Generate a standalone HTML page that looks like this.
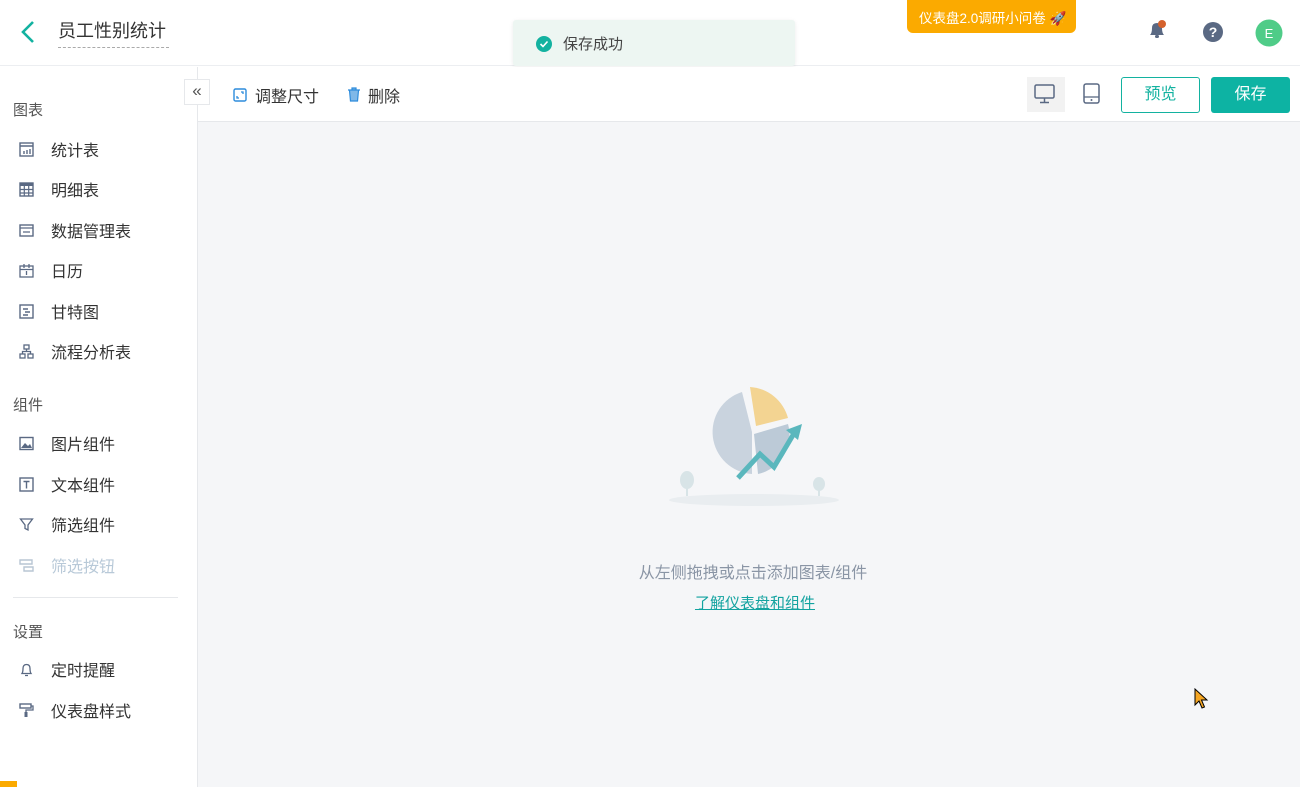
<!DOCTYPE html>
<html><head><meta charset="utf-8"><style>
*{margin:0;padding:0;box-sizing:border-box}
body{width:1300px;height:787px;overflow:hidden;background:#fff;font-family:"Liberation Sans","Noto Sans CJK SC",sans-serif;position:relative;color:#333}
.hdr{position:absolute;left:0;top:0;width:1300px;height:66px;background:#fff;border-bottom:1px solid #eceef1}
.title{position:absolute;left:58px;top:19px;font-size:18px;color:#333;border-bottom:1px dashed #aaa;padding-bottom:4px;width:111px;white-space:nowrap;line-height:24px}
.toast{position:absolute;left:513px;top:20px;width:282px;height:46px;background:#edf6f2;border-radius:3px;box-shadow:0 1px 4px rgba(0,0,0,.08);font-size:15px;color:#444;padding:13px 0 0 50px}
.toast svg{position:absolute;left:23px;top:16px}
.survey{position:absolute;left:907px;top:0;width:169px;height:33px;background:#fbaa00;border-radius:0 0 6px 6px;color:#fff;font-size:13.5px;padding:7px 0 0 12px;white-space:nowrap}
.side{position:absolute;left:0;top:67px;width:198px;height:720px;border-right:1px solid #e6e8eb;background:#fff}
.sec{position:absolute;left:13px;font-size:15px;color:#555}
.it{position:absolute;left:51px;font-size:16px;color:#333}
.ic{position:absolute;left:19px;width:15px;height:15px}
.tb{position:absolute;left:198px;top:67px;width:1102px;height:55px;border-bottom:1px solid #e6e8eb;background:#fff}
.canvas{position:absolute;left:198px;top:122px;width:1102px;height:665px;background:#f5f6f8}
.btn{position:absolute;top:77px;height:36px;border-radius:3px;font-size:16px;text-align:center;line-height:34px}
</style></head><body>
<div class="hdr">
<svg style="position:absolute;left:18px;top:19px" width="20" height="26" viewBox="0 0 20 26"><path d="M15 3 L5 13 L15 23" stroke="#13b2a0" stroke-width="2.6" fill="none"/></svg>
<div class="title">员工性别统计</div>
<div class="survey">仪表盘2.0调研小问卷 🚀</div>
<svg style="position:absolute;left:1147px;top:19px" width="22" height="22" viewBox="0 0 22 22"><path d="M3 16 Q5 14 5 9 Q5 4 10 4 Q15 4 15 9 Q15 14 17 16 Z" fill="#5a6983"/><rect x="8" y="16" width="4" height="3" rx="1.5" fill="#5a6983"/><circle cx="15" cy="5" r="4" fill="#d4612d"/></svg>
<svg style="position:absolute;left:1202px;top:21px" width="22" height="22"><circle cx="11" cy="11" r="10" fill="#5a6983"/><text x="11" y="16" font-size="14" font-weight="bold" fill="#fff" text-anchor="middle" font-family="Liberation Sans">?</text></svg>
<svg style="position:absolute;left:1255px;top:19px" width="28" height="28"><circle cx="14" cy="14" r="13.5" fill="#4fcc88"/><text x="14" y="19" font-size="13" fill="#fff" text-anchor="middle" font-family="Liberation Sans">E</text></svg>
</div>
<div class="toast"><svg width="16" height="16"><circle cx="8" cy="8" r="8" fill="#13b2a0"/><path d="M4.5 8 L7 10.5 L11.5 5.5" stroke="#fff" stroke-width="1.6" fill="none"/></svg>保存成功</div>
<div class="side">
<div class="sec" style="top:32px">图表</div>
<svg class="ic" style="top:75px" viewBox="0 0 15 15"><rect x="1" y="1" width="13" height="13" fill="none" stroke="#5a6983" stroke-width="1.4"/><path d="M1 4h13M5 12v-3M8 12v-4M11 12v-5" stroke="#5a6983" stroke-width="1.4"/></svg>
<div class="it" style="top:70px">统计表</div>
<svg class="ic" style="top:115px" viewBox="0 0 15 15"><rect x="1" y="1" width="13" height="13" fill="none" stroke="#5a6983" stroke-width="1.4"/><rect x="1" y="1" width="13" height="3" fill="#5a6983"/><path d="M1 7.5h13M1 11h13M5.3 4v10M9.7 4v10" stroke="#5a6983" stroke-width="1.2"/></svg>
<div class="it" style="top:110px">明细表</div>
<svg class="ic" style="top:156px" viewBox="0 0 15 15"><rect x="1" y="2" width="13" height="11" fill="none" stroke="#5a6983" stroke-width="1.4"/><path d="M1 5h13M4 9h7" stroke="#5a6983" stroke-width="1.3"/></svg>
<div class="it" style="top:151px">数据管理表</div>
<svg class="ic" style="top:196px" viewBox="0 0 15 15"><rect x="1" y="3" width="13" height="11" fill="none" stroke="#5a6983" stroke-width="1.3"/><path d="M1 6.5h13M5 1v4M10 1v4M7.5 8v4" stroke="#5a6983" stroke-width="1.3"/></svg>
<div class="it" style="top:191px">日历</div>
<svg class="ic" style="top:237px" viewBox="0 0 15 15"><rect x="1" y="1" width="13" height="13" fill="none" stroke="#5a6983" stroke-width="1.4"/><path d="M4 5h5M6 8h5M4 11h5" stroke="#5a6983" stroke-width="1.5"/></svg>
<div class="it" style="top:232px">甘特图</div>
<svg class="ic" style="top:277px" viewBox="0 0 15 15"><rect x="5" y="1" width="5" height="4" fill="none" stroke="#5a6983" stroke-width="1.3"/><rect x="1" y="10" width="5" height="4" fill="none" stroke="#5a6983" stroke-width="1.3"/><rect x="9" y="10" width="5" height="4" fill="none" stroke="#5a6983" stroke-width="1.3"/><path d="M7.5 5v2.5M3.5 10V7.5h8V10" stroke="#5a6983" stroke-width="1.3" fill="none"/></svg>
<div class="it" style="top:272px">流程分析表</div>
<div class="sec" style="top:327px">组件</div>
<svg class="ic" style="top:369px" viewBox="0 0 15 15"><rect x="1" y="1.5" width="13" height="12" fill="none" stroke="#5a6983" stroke-width="1.4"/><path d="M2 12 L6 7 L9 10 L11 8 L13 12Z" fill="#5a6983"/></svg>
<div class="it" style="top:364px">图片组件</div>
<svg class="ic" style="top:410px" viewBox="0 0 15 15"><rect x="1" y="1" width="13" height="13" fill="none" stroke="#5a6983" stroke-width="1.4"/><path d="M4.5 4.5h6M7.5 4.5v7" stroke="#5a6983" stroke-width="1.4"/></svg>
<div class="it" style="top:405px">文本组件</div>
<svg class="ic" style="top:450px" viewBox="0 0 15 15"><path d="M1.5 2h12L9 8v5L6 11.5V8Z" fill="none" stroke="#5a6983" stroke-width="1.3"/></svg>
<div class="it" style="top:445px">筛选组件</div>
<svg class="ic" style="top:491px" viewBox="0 0 15 15"><path d="M1 2h12v4H1ZM5 9h9v4H5Z" fill="none" stroke="#b8c6d4" stroke-width="1.4"/></svg>
<div class="it" style="top:486px;color:#b8c9d8">筛选按钮</div>
<div style="position:absolute;left:13px;top:530px;width:165px;border-top:1px solid #e6e8eb"></div>
<div class="sec" style="top:554px">设置</div>
<svg class="ic" style="top:595px" viewBox="0 0 15 15"><path d="M3 11.5Q4 10 4 6.5Q4 2.5 7.5 2.5Q11 2.5 11 6.5Q11 10 12 11.5Z M6 13.5h3" fill="none" stroke="#5a6983" stroke-width="1.3"/></svg>
<div class="it" style="top:590px">定时提醒</div>
<svg class="ic" style="top:636px" viewBox="0 0 15 15"><rect x="1" y="1" width="11" height="4" fill="none" stroke="#5a6983" stroke-width="1.4"/><path d="M12 3h2v4H7v2" fill="none" stroke="#5a6983" stroke-width="1.3"/><rect x="5.5" y="9" width="3" height="5" fill="#5a6983"/></svg>
<div class="it" style="top:631px">仪表盘样式</div>
<div style="position:absolute;left:0;top:714px;width:17px;height:6px;background:#fbaa00"></div>
</div>
<div class="tb">
<svg style="position:absolute;left:35px;top:21px" width="14" height="14"><rect x="1" y="1" width="12" height="12" rx="1.5" fill="none" stroke="#2d8cdc" stroke-width="1.4"/><path d="M4 8v2h2M10 6V4H8" stroke="#2d8cdc" stroke-width="1.3" fill="none"/></svg>
<div style="position:absolute;left:57px;top:16px;font-size:16px">调整尺寸</div>
<svg style="position:absolute;left:149px;top:20px" width="14" height="15"><path d="M1 3h12M5 3V1h4v2M2.5 3.5l1 10.5h7l1-10.5" fill="#7fb8e8" stroke="#2d8cdc" stroke-width="1.2"/></svg>
<div style="position:absolute;left:170px;top:16px;font-size:16px">删除</div>
<div style="position:absolute;left:829px;top:10px;width:38px;height:35px;background:#f2f2f2"></div>
<svg style="position:absolute;left:836px;top:17px" width="22" height="20"><rect x="1" y="1" width="19" height="13" rx="1.5" fill="none" stroke="#5a6983" stroke-width="1.5"/><path d="M10.5 14v4M6 18.5h9" stroke="#5a6983" stroke-width="1.5"/></svg>
<svg style="position:absolute;left:885px;top:16px" width="18" height="22"><rect x="1" y="1" width="15" height="19" rx="2" fill="none" stroke="#5a6983" stroke-width="1.5"/><path d="M1 14h15" stroke="#5a6983" stroke-width="1.3"/><circle cx="8.5" cy="17" r="1" fill="#5a6983"/></svg>
</div>
<div style="position:absolute;left:184px;top:79px;width:26px;height:26px;border:1px solid #e6e8eb;background:#fff;font-size:17px;color:#555;text-align:center;line-height:22px;z-index:5">«</div>
<div class="btn" style="left:1121px;width:79px;border:1px solid #13b2a0;color:#13b2a0;background:#fff">预览</div>
<div class="btn" style="left:1211px;width:79px;background:#0db3a3;color:#fff;line-height:36px">保存</div>
<div class="canvas">
<svg style="position:absolute;left:458px;top:260px" width="200" height="125" viewBox="0 0 200 125">
<ellipse cx="98" cy="118" rx="85" ry="6" fill="#e9edf0"/>
<path d="M86 10 A42 42 0 0 0 96 92 L96 50 Z" fill="#c9d3de"/>
<path d="M98 52 L132 42 A40 40 0 0 1 102 92 Z" fill="#bccad7"/>
<path d="M94 5 A42 42 0 0 1 132 36 L100 44 Z" fill="#f3d492"/>
<path d="M82 96 L104 72 L118 85 L140 48" stroke="#5ab7bd" stroke-width="5" fill="none"/>
<path d="M130 48 L146 42 L142 58 Z" fill="#5ab7bd"/>
<ellipse cx="31" cy="98" rx="7" ry="9" fill="#d8e4e7"/><path d="M31 104v10" stroke="#d8e4e7" stroke-width="2"/>
<ellipse cx="163" cy="102" rx="6" ry="7" fill="#d8e4e7"/><path d="M163 106v8" stroke="#d8e4e7" stroke-width="2"/>
</svg>
<div style="position:absolute;left:0;width:1110px;top:437px;text-align:center;font-size:16px;color:#8a95a5">从左侧拖拽或点击添加图表/组件</div>
<div style="position:absolute;left:0;width:1114px;top:470px;text-align:center;font-size:15px;color:#13a3a0;text-decoration:underline">了解仪表盘和组件</div>
<svg style="position:absolute;left:996px;top:566px" width="16" height="22"><path d="M1 1 L1 17 L5 13 L8 20 L10.5 19 L7.5 12 L13 12 Z" fill="#f5a623" stroke="#000" stroke-width="1"/></svg>
</div>
</body></html>
